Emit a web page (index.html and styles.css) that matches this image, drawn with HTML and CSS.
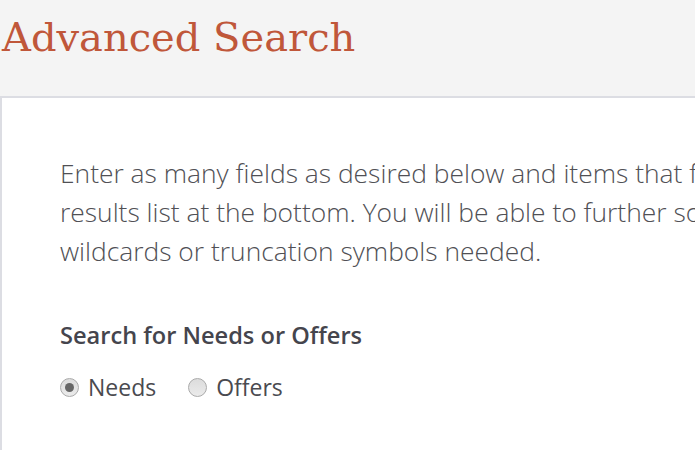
FILE: index.html
```html
<!DOCTYPE html>
<html lang="en">
<head>
    <meta charset="UTF-8">
    <title>Advanced Search</title>
    <link rel="stylesheet" href="styles.css">
</head>
<body>
    <header class="page-header">
        <h1>Advanced Search</h1>
    </header>

    <main class="content">
        <p class="intro">Enter as many fields as desired below and items that fit all criteria will be displayed in the<br>
        results list at the bottom. You will be able to further sort and filter the results there. No<br>
        wildcards or truncation symbols needed.</p>

        <fieldset class="field">
            <legend>Search for Needs or Offers</legend>
            <div class="radio-row">
                <label class="radio"><input type="radio" name="kind" checked> Needs</label>
                <label class="radio"><input type="radio" name="kind"> Offers</label>
            </div>
        </fieldset>
    </main>
</body>
</html>
```

FILE: styles.css
```css
* {
    margin: 0;
    padding: 0;
    box-sizing: border-box;
}

body {
    font-family: 'Open Sans', sans-serif;
    color: #4a4a4f;
    background: #f4f4f4;
    overflow: hidden;
}

.page-header {
    height: 96px;
    padding: 7px 0 0 2px;
}

.page-header h1 {
    font-family: 'DejaVu Serif', serif;
    font-weight: 400;
    font-size: 40px;
    color: #c0573a;
    line-height: 60px;
}

.content {
    background: #fff;
    border-top: 2px solid #dcdde3;
    border-left: 2px solid #dcdde3;
    padding: 56px 0 0 58px;
    min-height: 360px;
    overflow: hidden;
}

.intro {
    font-weight: 300;
    font-size: 26.4px;
    line-height: 39px;
    white-space: nowrap;
    color: #505055;
}

.field {
    border: none;
    margin-top: 48px;
}

.field legend {
    font-weight: 600;
    font-size: 23.6px;
    color: #45454d;
}

.radio-row {
    display: flex;
    gap: 32px;
    margin-top: 20px;
}

.radio {
    display: flex;
    align-items: center;
    gap: 9px;
    font-size: 23px;
}

.radio input {
    appearance: none;
    width: 19px;
    height: 19px;
    margin: 0;
    border-radius: 50%;
    border: 1px solid #aaa;
    background: linear-gradient(#dcdcdc, #ebebeb);
    display: grid;
    place-items: center;
}

.radio input:checked::after {
    content: '';
    width: 9px;
    height: 9px;
    border-radius: 50%;
    background: #666;
}
```
